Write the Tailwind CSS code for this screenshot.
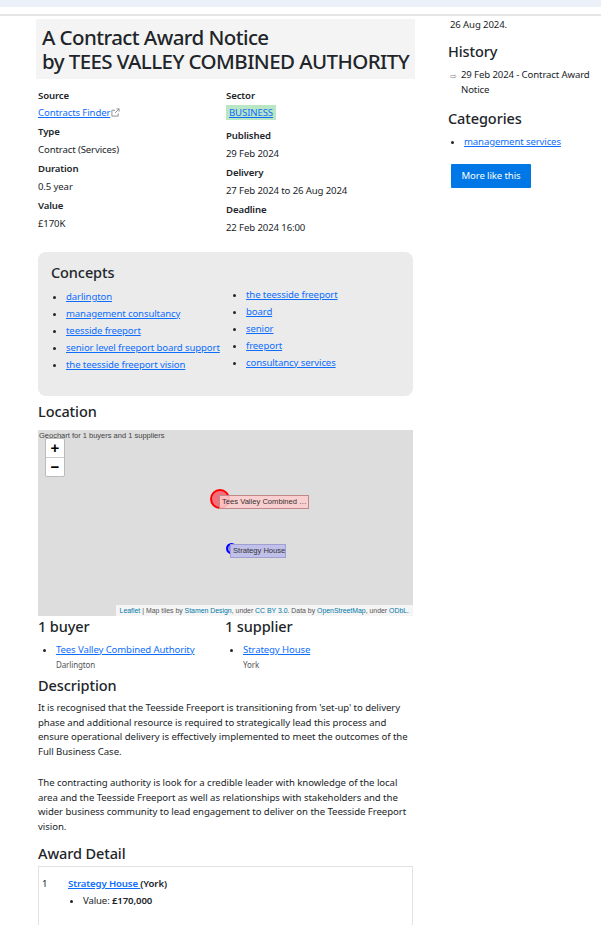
<!DOCTYPE html>
<html lang="en">
<head>
<meta charset="UTF-8">
<title>A Contract Award Notice</title>
<script src="https://cdn.jsdelivr.net/npm/@tailwindcss/browser@4"></script>
</head>
<body class="bg-white text-[#212529] font-['Noto_Sans',sans-serif] text-[9.6px] tracking-[-0.12px] leading-[17px] h-[925px] overflow-hidden">
<div class="h-[7px] bg-[#ecf0f8]"></div>
<div class="h-[9px] border-b-2 border-[#e5e5e5]"></div>

<div class="flex pl-[36px]">
  <!-- main column -->
  <main class="w-[379px]">
    <div class="bg-[#f4f4f4] mt-[3px] h-[60px] px-[6px] py-[6px] text-[20.500px] tracking-[-0.58px] leading-[24px] font-medium text-[#212529] whitespace-nowrap">
      <h1>A Contract Award Notice<br>by TEES VALLEY COMBINED AUTHORITY</h1>
    </div>

    <div class="flex pl-[2px] mt-[8px]">
      <div class="w-[188px]">
        <div class="font-semibold">Source</div>
        <div class="h-[17px] flex items-center">
          <a href="#" class="text-[#0d6efd] underline">Contracts Finder</a>
          <svg class="w-[9px] h-[9px] ml-[1px] text-[#888]" viewBox="0 0 10 10" fill="none" stroke="currentColor" stroke-width="1"><path d="M8 6v3H1V2.500h3.500M6 1h3v3M9 1 4.500 5.500"/></svg>
        </div>
        <div class="font-semibold mt-[2px]">Type</div>
        <div class="mt-[1px]">Contract (Services)</div>
        <div class="font-semibold mt-[2px]">Duration</div>
        <div class="mt-[1px]">0.5 year</div>
        <div class="font-semibold mt-[2px]">Value</div>
        <div class="mt-[1px]">£170K</div>
      </div>
      <div>
        <div class="font-semibold">Sector</div>
        <div><a href="#" class="inline-block h-[15px] leading-[15px] px-[3px] bg-[#b9e6c4] text-[#0d6efd] underline">BUSINESS</a></div>
        <div class="font-semibold mt-[6px]">Published</div>
        <div class="mt-[1px]">29 Feb 2024</div>
        <div class="font-semibold mt-[2px]">Delivery</div>
        <div class="mt-[1px]">27 Feb 2024 to 26 Aug 2024</div>
        <div class="font-semibold mt-[2px]">Deadline</div>
        <div class="mt-[1px]">22 Feb 2024 16:00</div>
      </div>
    </div>

    <section class="ml-[2px] mt-[16px] w-[375px] h-[144px] bg-[#ebebeb] rounded-[8px] pl-[13px] pt-[10px]">
      <h2 class="text-[14.500px] tracking-[-0.1px] leading-[20px] font-medium">Concepts</h2>
      <div class="flex">
        <ul class="list-disc pl-[15px] w-[180px] mt-[6px] whitespace-nowrap">
          <li class="h-[17px]"><a href="#" class="text-[#0d6efd] underline">darlington</a></li>
          <li class="h-[17px]"><a href="#" class="text-[#0d6efd] underline">management consultancy</a></li>
          <li class="h-[17px]"><a href="#" class="text-[#0d6efd] underline">teesside freeport</a></li>
          <li class="h-[17px]"><a href="#" class="text-[#0d6efd] underline">senior level freeport board support</a></li>
          <li class="h-[17px]"><a href="#" class="text-[#0d6efd] underline">the teesside freeport vision</a></li>
        </ul>
        <ul class="list-disc pl-[15px] mt-[4px] whitespace-nowrap">
          <li class="h-[17px]"><a href="#" class="text-[#0d6efd] underline">the teesside freeport</a></li>
          <li class="h-[17px]"><a href="#" class="text-[#0d6efd] underline">board</a></li>
          <li class="h-[17px]"><a href="#" class="text-[#0d6efd] underline">senior</a></li>
          <li class="h-[17px]"><a href="#" class="text-[#0d6efd] underline">freeport</a></li>
          <li class="h-[17px]"><a href="#" class="text-[#0d6efd] underline">consultancy services</a></li>
        </ul>
      </div>
    </section>

    <h2 class="ml-[2px] mt-[5px] text-[14.500px] tracking-[-0.1px] leading-[20px] font-medium">Location</h2>

    <div class="relative ml-[2px] mt-[9px] w-[375px] h-[186px] bg-[#dddddd] font-['Liberation_Sans',sans-serif] tracking-normal overflow-hidden">
      <div class="absolute left-[1px] top-0 text-[7.500px] leading-[12px] text-[#444]">Geochart for 1 buyers and 1 suppliers</div>
      <div class="absolute left-[7px] top-[8px] w-[20px] h-[39px] bg-white rounded-[2px] border border-[#bbb] text-black text-center">
        <div class="h-[19px] border-b border-[#ccc] text-[15px] leading-[18px] font-bold">+</div>
        <div class="text-[15px] leading-[18px] font-bold">−</div>
      </div>
      <div class="absolute left-[172px] top-[59px] w-[20px] h-[20px] rounded-full bg-[#f0707c] border-2 border-[#f00]"></div>
      <div class="absolute left-[181px] top-[65px] w-[90px] h-[14px] bg-[#ffcccc]/85 border border-[#c08a8a] text-[7.600px] leading-[12px] text-[#333] pl-[2px] whitespace-nowrap">Tees Valley Combined …</div>
      <div class="absolute left-[188px] top-[113px] w-[11px] h-[11px] rounded-full bg-[#8888ee] border-2 border-[#00f]"></div>
      <div class="absolute left-[192px] top-[114px] w-[56px] h-[14px] bg-[#c0c0ea] border border-[#a0a0d0] text-[7.600px] leading-[12px] text-[#333] pl-[2px] whitespace-nowrap">Strategy House</div>
      <div class="absolute right-0 bottom-0 h-[11px] bg-white/70 px-[4px] text-[6.900px] leading-[11px] text-[#555] whitespace-nowrap">
        <a href="#" class="text-[#0078a8]">Leaflet</a> | Map tiles by <a href="#" class="text-[#0078a8]">Stamen Design</a>, under <a href="#" class="text-[#0078a8]">CC BY 3.0</a>. Data by <a href="#" class="text-[#0078a8]">OpenStreetMap</a>, under <a href="#" class="text-[#0078a8]">ODbL</a>.
      </div>
    </div>

    <div class="flex ml-[2px]">
      <div class="w-[187px]">
        <h2 class="text-[14.500px] tracking-[-0.1px] leading-[20px] font-medium">1 buyer</h2>
        <ul class="list-disc pl-[18px] mt-[5px]">
          <li><a href="#" class="text-[#0d6efd] underline">Tees Valley Combined Authority</a>
            <div class="text-[8px] leading-[14px] text-[#555]">Darlington</div></li>
        </ul>
      </div>
      <div>
        <h2 class="text-[14.500px] tracking-[-0.1px] leading-[20px] font-medium">1 supplier</h2>
        <ul class="list-disc pl-[18px] mt-[5px]">
          <li><a href="#" class="text-[#0d6efd] underline">Strategy House</a>
            <div class="text-[8px] leading-[14px] text-[#555]">York</div></li>
        </ul>
      </div>
    </div>

    <h2 class="ml-[2px] mt-[3px] text-[14.500px] tracking-[-0.1px] leading-[20px] font-medium">Description</h2>
    <div class="ml-[2px] mt-[6px] w-[372px] leading-[14.700px] tracking-[-0.06px]">
      <p>It is recognised that the Teesside Freeport is transitioning from 'set-up' to delivery phase and additional resource is required to strategically lead this process and ensure operational delivery is effectively implemented to meet the outcomes of the Full Business Case.</p>
      <p class="mt-[16px]">The contracting authority is look for a credible leader with knowledge of the local area and the Teesside Freeport as well as relationships with stakeholders and the wider business community to lead engagement to deliver on the Teesside Freeport vision.</p>
    </div>

    <h2 class="ml-[2px] mt-[8px] text-[14.500px] tracking-[-0.1px] leading-[20px] font-medium">Award Detail</h2>
    <div class="flex ml-[2px] mt-[3px] w-[375px] h-[80px] border border-b-0 border-[#e2e2e2] pt-[8px] pl-[3px]">
      <div class="w-[26px]">1</div>
      <div>
        <div class="font-semibold"><a href="#" class="text-[#0d6efd] underline">Strategy House </a>(York)</div>
        <ul class="list-disc pl-[15px]"><li>Value: <b class="font-semibold">£170,000</b></li></ul>
      </div>
    </div>
  </main>

  <!-- side column -->
  <aside class="ml-[33px] w-[145px]">
    <div class="pl-[2px]">26 Aug 2024.</div>
    <h2 class="mt-[8px] text-[14.500px] tracking-[-0.1px] leading-[20px] font-medium">History</h2>
    <div class="flex mt-[6px] pl-[2px]">
      <span class="w-[11px] shrink-0 text-[#888] text-[8px]">⇨</span>
      <div class="leading-[15px]">29 Feb 2024 - Contract Award Notice</div>
    </div>
    <h2 class="mt-[11px] text-[14.500px] tracking-[-0.1px] leading-[20px] font-medium">Categories</h2>
    <ul class="list-disc pl-[16px] mt-[5px]">
      <li><a href="#" class="text-[#0d6efd] underline">management services</a></li>
    </ul>
    <a href="#" class="inline-block ml-[3px] mt-[14px] w-[80px] h-[24px] text-center leading-[24px] bg-[#0077e6] text-white rounded-[1px]">More like this</a>
  </aside>
</div>
</body>
</html>
